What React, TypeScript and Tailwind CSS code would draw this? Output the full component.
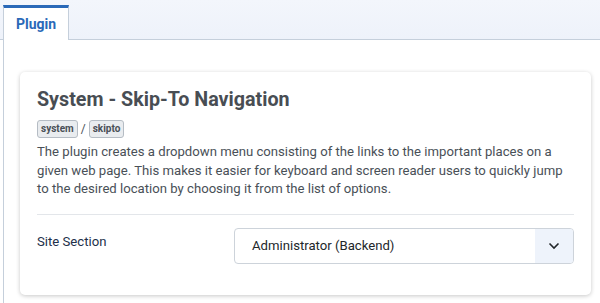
export default function App() {
  return (
    <div className="w-[600px] h-[303px] overflow-hidden bg-white font-['Roboto',sans-serif]">
      {/* tab strip */}
      <div className="flex h-[40px] pl-[3px] pt-[5px] bg-gradient-to-b from-[#f3f6fc] to-[#eef2fa] border-b border-[#c5cfdb]">
        <div className="w-[66px] h-[35px] -mb-px bg-white border-t-[3px] border-t-[#2a69b8] border-x border-x-[#c5cfdb] flex items-center justify-center">
          <span className="text-[14px] font-bold text-[#2a69b8]">Plugin</span>
        </div>
      </div>

      <div className="ml-[3px] h-[263px] border-l border-[#c5cfdb] pl-[16px] pr-[9px] pt-[32px]">
        <div className="rounded-[5px] bg-white shadow-[0_1px_4px_rgba(0,0,0,0.22)] px-[17px] pt-[15px] pb-[31px]">
          <h2 className="text-[19.7px] leading-[26px] font-bold text-[#484d53]">System - Skip-To Navigation</h2>
          <div className="mt-[7px] flex items-center gap-[3px] text-[#495057]">
            <span className="h-[18px] px-[3px] rounded-[3px] border border-[#b5bcc4] bg-[#e9ecef] text-[10px] font-bold leading-[16px]">system</span>
            <span className="text-[12px]">/</span>
            <span className="h-[18px] px-[3px] rounded-[3px] border border-[#b5bcc4] bg-[#e9ecef] text-[10px] font-bold leading-[16px]">skipto</span>
          </div>
          <p className="mt-[5px] text-[13.15px] leading-[18.5px] text-[#495057]">
            The plugin creates a dropdown menu consisting of the links to the important places on a given web page. This makes it easier for keyboard and screen reader users to quickly jump to the desired location by choosing it from the list of options.
          </p>
          <div className="mt-[15px] border-t border-[#e3e6ea]" />
          <div className="mt-[13px] flex items-start">
            <label className="w-[197px] pt-[5px] text-[13.15px] leading-[18px] text-[#22304a]">Site Section</label>
            <div className="flex-1 h-[36px] flex rounded-[4px] border border-[#cdd3da] overflow-hidden">
              <div className="flex-1 flex items-center pl-[17px] text-[13.15px] text-[#22262a]">Administrator (Backend)</div>
              <div className="w-[38px] bg-[#eef3fb] flex items-center justify-center">
                <svg width="12" height="8" viewBox="0 0 12 8" fill="none">
                  <path d="M1.5 1.5 6 6l4.5-4.5" stroke="#22262a" strokeWidth="1.6" />
                </svg>
              </div>
            </div>
          </div>
        </div>
      </div>
    </div>
  );
}
